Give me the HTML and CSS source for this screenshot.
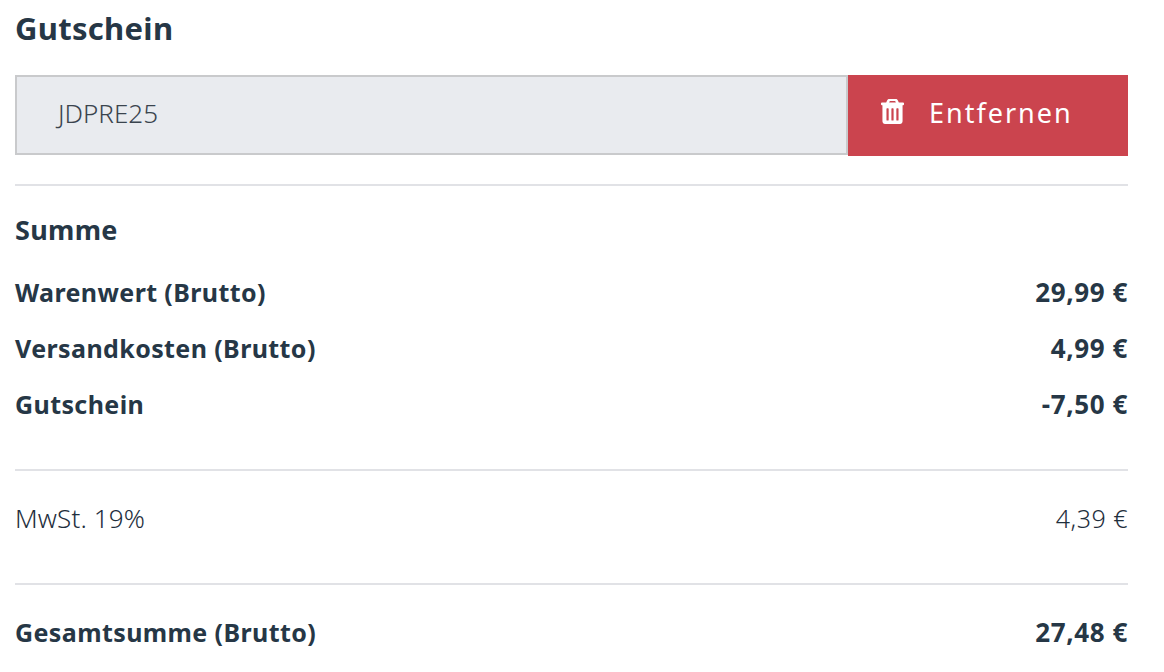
FILE: index.html
```html
<!DOCTYPE html>
<html lang="de">
<head>
<meta charset="utf-8">
<title>Gutschein</title>
<link rel="stylesheet" href="styles.css">
</head>
<body>
<main class="panel">
  <h2 class="title">Gutschein</h2>
  <div class="coupon">
    <div class="coupon-input">JDPRE25</div>
    <button class="coupon-remove" type="button">
      <svg class="trash" viewBox="0 0 24 28" width="23" height="27" aria-hidden="true">
        <path fill="#fff" fill-rule="evenodd" d="M8.6 1h6.8c.9 0 1.7.5 2.1 1.3L18.6 4.5H23c.6 0 1 .4 1 1v1c0 .6-.4 1-1 1h-.5v16.7c0 1.600-1.200 2.800-2.700 2.800H4.200c-1.500 0-2.700-1.200-2.700-2.800V7.500H1c-.6 0-1-.4-1-1v-1c0-.6.4-1 1-1h4.400l1.100-2.200C6.900 1.500 7.700 1 8.600 1zM8.500 4.500h7l-.6-1.100c-.1-.2-.2-.3-.4-.3H9.500c-.2 0-.3.1-.4.3zM6.400 10.500c-.4 0-.7.300-.7.700v11.600c0 .4.300.7.700.7h.9c.4 0 .7-.3.700-.7V11.200c0-.4-.3-.7-.7-.7zM11.550 10.500c-.4 0-.7.300-.7.700v11.600c0 .4.300.7.700.7h.9c.4 0 .7-.3.700-.7V11.200c0-.4-.3-.7-.7-.7zM16.700 10.500c-.4 0-.7.300-.7.700v11.600c0 .4.300.7.700.7h.9c.4 0 .7-.3.700-.7V11.200c0-.4-.3-.7-.7-.7z"/>
      </svg>
      <span>Entfernen</span>
    </button>
  </div>
  <section class="block block-sum">
    <h3 class="subtitle">Summe</h3>
    <div class="row strong"><span>Warenwert (Brutto)</span><span class="amount">29,99 €</span></div>
    <div class="row strong"><span>Versandkosten (Brutto)</span><span class="amount">4,99 €</span></div>
    <div class="row strong"><span>Gutschein</span><span class="amount">-7,50 €</span></div>
  </section>
  <section class="block block-tax">
    <div class="row"><span>MwSt. 19%</span><span class="amount">4,39 €</span></div>
  </section>
  <section class="block block-total">
    <div class="row strong"><span>Gesamtsumme (Brutto)</span><span class="amount">27,48 €</span></div>
  </section>
</main>
</body>
</html>
```
FILE: styles.css
```css
* { box-sizing: border-box; }
html, body { margin: 0; background: #fff; }
body {
  width: 1164px;
  height: 672px;
  overflow: hidden;
  font-family: "Noto Sans", "Lato", sans-serif;
  color: #263746;
}
.panel { width: 1113px; margin-left: 15px; }
.title { margin: 0; height: 75px; padding-top: 8px; font-size: 31px; line-height: 40px; font-weight: 700; letter-spacing: .3px; }
.coupon { display: flex; height: 81px; }
.coupon-input {
  flex: 1;
  height: 80px;
  display: flex;
  align-items: center;
  padding: 0 0 4px 41px;
  background: #e9ebef;
  border: 2px solid #c9cacc;
  font-size: 26px;
  font-weight: 300;
  color: #3a444e;
}
.coupon-remove {
  width: 280px;
  border: 0;
  padding: 0 0 6px 33px;
  display: flex;
  align-items: center;
  gap: 25px;
  background: #cb444e;
  color: #fff;
  font-family: inherit;
  font-size: 27px;
  letter-spacing: 2px;
}
.trash { flex: none; margin-top: -3px; }
.block { border-top: 2px solid #e1e2e6; }
.block-sum { margin-top: 28px; height: 285px; padding-top: 26px; }
.block-tax { height: 114px; padding-top: 27px; }
.block-total { padding-top: 27px; }
.subtitle { margin: 0 0 24px; font-size: 27px; line-height: 36px; font-weight: 700; letter-spacing: .3px; }
.row { display: flex; justify-content: space-between; font-size: 25px; line-height: 40px; margin-bottom: 16px; }
.strong { letter-spacing: .4px; font-weight: 700; }
.amount { font-size: 26px; letter-spacing: .6px; }
.block-tax .row { font-size: 26px; font-weight: 300; letter-spacing: .15px; color: #1f2f3d; }
.block-tax .amount { font-size: 25px; letter-spacing: .5px; }
```
